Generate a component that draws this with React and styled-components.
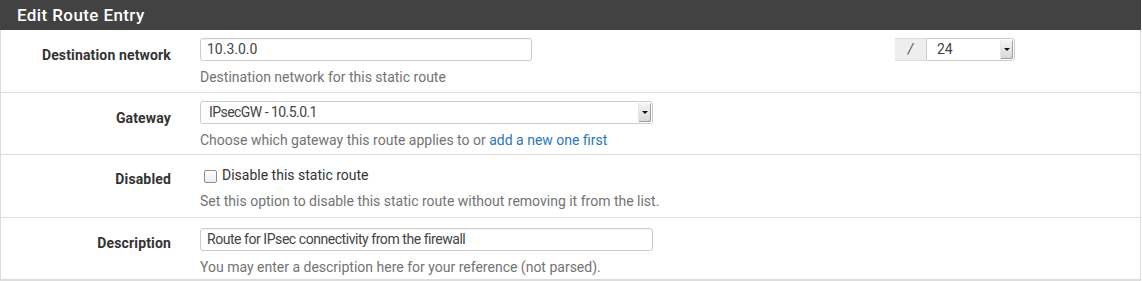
import React from 'react'
import styled, { createGlobalStyle } from 'styled-components'

const GlobalStyle = createGlobalStyle`
  body {
    margin: 0;
    background: #fff;
    font-family: Roboto, "Liberation Sans", sans-serif;
    color: #333;
  }
`

const Panel = styled.div`
  width: 1139px;
  border: 1px solid #ddd;
  border-top: none;
`

const Heading = styled.div`
  background: #424242;
  color: #fff;
  height: 30px;
  padding-left: 17px;
  display: flex;
  align-items: center;
  font-size: 17px;
  font-weight: 500;
  letter-spacing: 0.4px;
  margin: 0 -1px;
`

const Row = styled.div`
  display: grid;
  grid-template-columns: 170px 1fr;
  column-gap: 29px;
  height: ${p => p.$h || 62}px;
  box-sizing: border-box;
  padding-top: ${p => p.$pt || 8}px;
  border-bottom: 1px solid #ddd;
`

const Label = styled.div`
  text-align: right;
  font-size: 14px;
  font-weight: 700;
  line-height: 20px;
  letter-spacing: 0.15px;
  padding-top: ${p => p.$top || 7}px;
  color: #333;
`

const Field = styled.div`
  display: flex;
  flex-direction: column;
`

const Line = styled.div`
  display: grid;
  grid-template-columns: 332px 364px 120px;
  align-items: start;
`

const TextInput = styled.div`
  width: ${p => p.$w}px;
  height: 23px;
  box-sizing: border-box;
  border: 1px solid #ccc;
  border-radius: 3px;
  padding: 0 6px;
  font-size: 14px;
  line-height: 21px;
  color: #444;
  letter-spacing: ${p => p.$tight ? '-0.45px' : '0'};
  background: #fff;
  box-shadow: inset 0 1px 1px rgba(0,0,0,0.04);
`

const SelectBox = styled.div`
  width: ${p => p.$w}px;
  height: 23px;
  box-sizing: border-box;
  border: 1px solid #ccc;
  border-radius: ${p => p.$joined ? '0 3px 3px 0' : '3px'};
  display: flex;
  align-items: stretch;
  font-size: 14px;
  color: #444;
  background: #fff;
  letter-spacing: ${p => p.$tight ? '-0.55px' : '0'};
`

const SelectText = styled.span`
  flex: 1;
  padding-left: ${p => p.$pad || 8}px;
  line-height: 21px;
`

const ArrowButton = styled.span`
  width: 12px;
  margin: 1px 1px 1px 0;
  background: linear-gradient(#f4f4f4, #d8d8d8);
  border-left: 1px solid #e6e6e6;
  box-shadow: inset -1px -1px 0 #a0a0a0;
  display: flex;
  align-items: center;
  justify-content: center;
  border-radius: 0 2px 2px 0;
`

const Arrow = styled.span`
  width: 0;
  height: 0;
  border-left: 3px solid transparent;
  border-right: 3px solid transparent;
  border-top: 3px solid #111;
`

const Group = styled.div`
  display: flex;
  grid-column: 3;
  margin-left: -1px;
`

const Addon = styled.div`
  width: 31px;
  height: 23px;
  box-sizing: border-box;
  background: #eee;
  border-top: 1px solid #ddd;
  border-bottom: 1px solid #ddd;
  font-size: 14px;
  color: #555;
  font-style: italic;
  text-align: center;
  line-height: 21px;
`

const Help = styled.div`
  margin-top: ${p => p.$mt || 6}px;
  font-size: 14px;
  line-height: 20px;
  color: #737373;
`

const Link = styled.a`
  color: #2b77b8;
  text-decoration: none;
`

const CheckLine = styled.label`
  display: flex;
  align-items: center;
  height: 20px;
  padding-left: 4px;
  font-size: 14px;
  color: #333;
`

const Box = styled.span`
  width: 11px;
  height: 11px;
  border: 1px solid #8f8f8f;
  border-radius: 2px;
  background: linear-gradient(#fff, #ececec);
  margin-right: 5px;
  margin-top: 2px;
`

function Select ({ w, value, joined, tight, pad }) {
  return (
    <SelectBox $w={w} $joined={joined} $tight={tight}>
      <SelectText $pad={pad}>{value}</SelectText>
      <ArrowButton><Arrow /></ArrowButton>
    </SelectBox>
  )
}

export default function App () {
  return (
    <>
      <GlobalStyle />
      <Panel>
        <Heading>Edit Route Entry</Heading>
        <Row $h={63}>
          <Label $top={7}>Destination network</Label>
          <Field>
            <Line>
              <TextInput $w={332}>10.3.0.0</TextInput>
              <Group>
                <Addon>/</Addon>
                <Select w={89} value='24' joined pad={10} />
              </Group>
            </Line>
            <Help>Destination network for this static route</Help>
          </Field>
        </Row>
        <Row>
          <Label $top={7}>Gateway</Label>
          <Field>
            <Select w={453} value='IPsecGW - 10.5.0.1' tight pad={8} />
            <Help>Choose which gateway this route applies to or <Link href='#'>add a new one first</Link></Help>
          </Field>
        </Row>
        <Row $pt={10} $h={63}>
          <Label $top={4}>Disabled</Label>
          <Field>
            <CheckLine><Box />Disable this static route</CheckLine>
            <Help $mt={6}>Set this option to disable this static route without removing it from the list.</Help>
          </Field>
        </Row>
        <Row $pt={10}>
          <Label $top={5}>Description</Label>
          <Field>
            <TextInput $w={453} $tight>Route for IPsec connectivity from the firewall</TextInput>
            <Help>You may enter a description here for your reference (not parsed).</Help>
          </Field>
        </Row>
      </Panel>
    </>
  )
}
